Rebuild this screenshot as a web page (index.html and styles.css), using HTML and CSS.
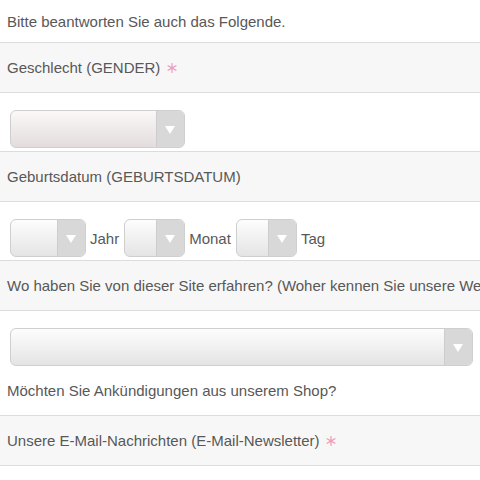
FILE: index.html
```html
<!DOCTYPE html>
<html lang="de">
<head>
    <meta charset="UTF-8">
    <meta name="viewport" content="width=device-width, initial-scale=1.0">
    <title>Fragebogen</title>
    <link rel="stylesheet" href="styles.css">
</head>
<body>
    <div class="form">
        <div class="row intro">Bitte beantworten Sie auch das Folgende.</div>

        <div class="row label-row">Geschlecht (GENDER) <span class="required">＊</span></div>
        <div class="row field-row">
            <div class="select select-gender"><span class="arrow"></span></div>
        </div>

        <div class="row label-row">Geburtsdatum (GEBURTSDATUM)</div>
        <div class="row field-row date-row">
            <div class="select select-year"><span class="arrow"></span></div>
            <span class="unit">Jahr</span>
            <div class="select select-small"><span class="arrow"></span></div>
            <span class="unit">Monat</span>
            <div class="select select-small"><span class="arrow"></span></div>
            <span class="unit">Tag</span>
        </div>

        <div class="row label-row">Wo haben Sie von dieser Site erfahren? (Woher kennen Sie unsere We</div>
        <div class="field-row open">
            <div class="select select-full"><span class="arrow"></span></div>
        </div>
        <div class="row text-row">Möchten Sie Ankündigungen aus unserem Shop?</div>

        <div class="row label-row">Unsere E-Mail-Nachrichten (E-Mail-Newsletter) <span class="required">＊</span></div>
    </div>
</body>
</html>
```

FILE: styles.css
```css
* {
    margin: 0;
    padding: 0;
    box-sizing: border-box;
}

body {
    font-family: 'Liberation Sans', Arial, sans-serif;
    font-size: 15px;
    color: #585858;
    background-color: #fff;
    overflow: hidden;
}

.row {
    border-bottom: 1px solid #dcdcdc;
    padding: 0 7px;
    display: flex;
    align-items: center;
    white-space: nowrap;
    overflow: hidden;
}

.intro {
    height: 43px;
}

.label-row {
    height: 50px;
    background-color: #f7f7f7;
}

.text-row {
    height: 50px;
}

.required {
    font-family: 'Noto Sans CJK JP', sans-serif;
    font-weight: 700;
    color: #f09dbb;
    font-size: 13px;
    margin-left: 5px;
}

.field-row {
    padding: 17px 0 3px 10px;
    display: flex;
    align-items: center;
}

.field-row.open {
    padding-bottom: 0;
}

.date-row .unit {
    margin: 0 5px 0 4px;
}

/* Select boxes */
.select {
    flex: none;
    position: relative;
    height: 38px;
    border: 1px solid #cfcfcf;
    border-radius: 6px;
    background: linear-gradient(#fdfdfd, #e4e4e4);
    overflow: hidden;
}

.select-gender {
    width: 175px;
    background: linear-gradient(#fbf8f8, #e3dcdc);
}

.select-year {
    width: 76px;
}

.select-small {
    width: 61px;
}

.select-full {
    width: 463px;
}

.arrow {
    position: absolute;
    top: 0;
    right: 0;
    bottom: 0;
    width: 28px;
    background-color: #d8d8d8;
    border-left: 1px solid #cdcdcd;
}

.arrow::after {
    content: "";
    position: absolute;
    top: 15px;
    left: 8px;
    border-left: 5px solid transparent;
    border-right: 5px solid transparent;
    border-top: 8px solid #fff;
}
```
